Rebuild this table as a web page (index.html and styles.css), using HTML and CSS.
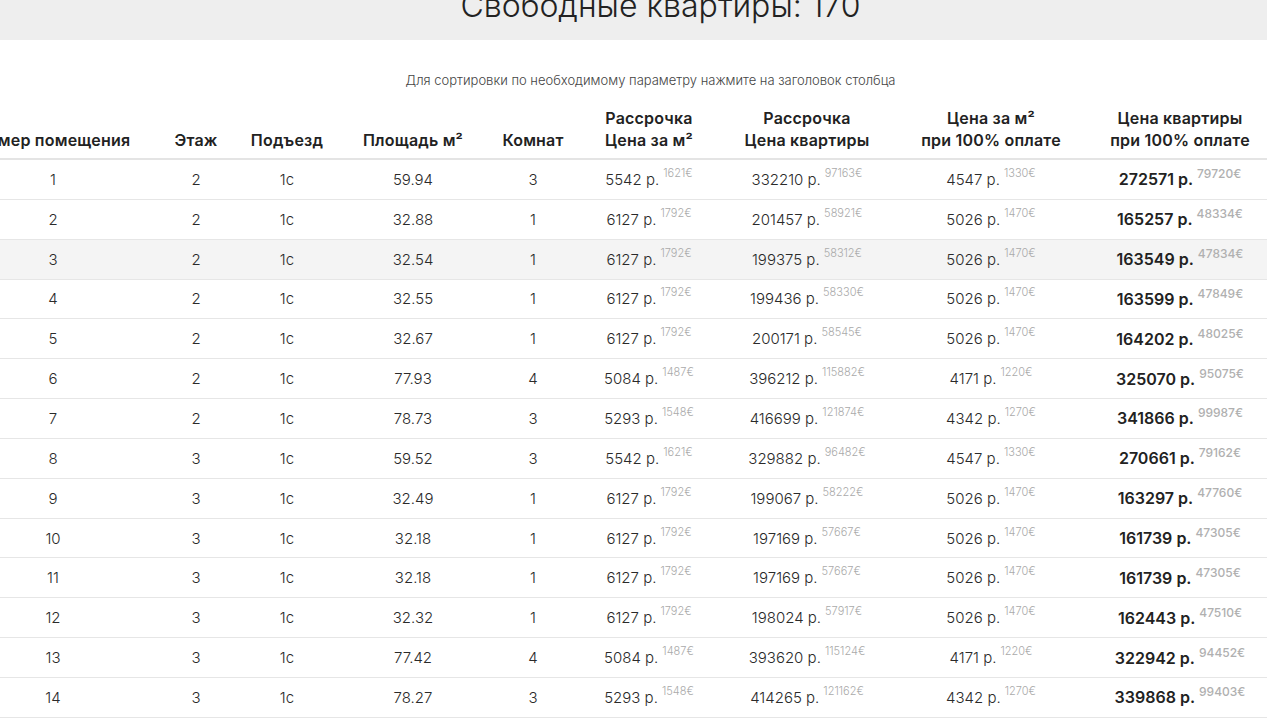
FILE: index.html
```html
<!DOCTYPE html>
<html lang="ru">
<head>
<meta charset="utf-8">
<title>Свободные квартиры</title>
<link rel="stylesheet" href="styles.css">
</head>
<body>
<div class="topbar"><h1 class="title">Свободные квартиры: 170</h1></div>
<p class="hint">Для сортировки по необходимому параметру нажмите на заголовок столбца</p>
<div class="grid">
  <div class="row head">
    <div class="c">Номер помещения</div>
    <div class="c">Этаж</div>
    <div class="c">Подъезд</div>
    <div class="c">Площадь м²</div>
    <div class="c">Комнат</div>
    <div class="c">Рассрочка<br>Цена за м²</div>
    <div class="c">Рассрочка<br>Цена квартиры</div>
    <div class="c">Цена за м²<br>при 100% оплате</div>
    <div class="c">Цена квартиры<br>при 100% оплате</div>
  </div>
  <div class="row"><div class="c">1</div><div class="c">2</div><div class="c">1с</div><div class="c">59.94</div><div class="c">3</div><div class="c"><span>5542 р.</span><sup>1621€</sup></div><div class="c"><span>332210 р.</span><sup>97163€</sup></div><div class="c"><span>4547 р.</span><sup>1330€</sup></div><div class="c b"><span>272571 р.</span><sup>79720€</sup></div></div>
  <div class="row"><div class="c">2</div><div class="c">2</div><div class="c">1с</div><div class="c">32.88</div><div class="c">1</div><div class="c"><span>6127 р.</span><sup>1792€</sup></div><div class="c"><span>201457 р.</span><sup>58921€</sup></div><div class="c"><span>5026 р.</span><sup>1470€</sup></div><div class="c b"><span>165257 р.</span><sup>48334€</sup></div></div>
  <div class="row hover"><div class="c">3</div><div class="c">2</div><div class="c">1с</div><div class="c">32.54</div><div class="c">1</div><div class="c"><span>6127 р.</span><sup>1792€</sup></div><div class="c"><span>199375 р.</span><sup>58312€</sup></div><div class="c"><span>5026 р.</span><sup>1470€</sup></div><div class="c b"><span>163549 р.</span><sup>47834€</sup></div></div>
  <div class="row"><div class="c">4</div><div class="c">2</div><div class="c">1с</div><div class="c">32.55</div><div class="c">1</div><div class="c"><span>6127 р.</span><sup>1792€</sup></div><div class="c"><span>199436 р.</span><sup>58330€</sup></div><div class="c"><span>5026 р.</span><sup>1470€</sup></div><div class="c b"><span>163599 р.</span><sup>47849€</sup></div></div>
  <div class="row"><div class="c">5</div><div class="c">2</div><div class="c">1с</div><div class="c">32.67</div><div class="c">1</div><div class="c"><span>6127 р.</span><sup>1792€</sup></div><div class="c"><span>200171 р.</span><sup>58545€</sup></div><div class="c"><span>5026 р.</span><sup>1470€</sup></div><div class="c b"><span>164202 р.</span><sup>48025€</sup></div></div>
  <div class="row"><div class="c">6</div><div class="c">2</div><div class="c">1с</div><div class="c">77.93</div><div class="c">4</div><div class="c"><span>5084 р.</span><sup>1487€</sup></div><div class="c"><span>396212 р.</span><sup>115882€</sup></div><div class="c"><span>4171 р.</span><sup>1220€</sup></div><div class="c b"><span>325070 р.</span><sup>95075€</sup></div></div>
  <div class="row"><div class="c">7</div><div class="c">2</div><div class="c">1с</div><div class="c">78.73</div><div class="c">3</div><div class="c"><span>5293 р.</span><sup>1548€</sup></div><div class="c"><span>416699 р.</span><sup>121874€</sup></div><div class="c"><span>4342 р.</span><sup>1270€</sup></div><div class="c b"><span>341866 р.</span><sup>99987€</sup></div></div>
  <div class="row"><div class="c">8</div><div class="c">3</div><div class="c">1с</div><div class="c">59.52</div><div class="c">3</div><div class="c"><span>5542 р.</span><sup>1621€</sup></div><div class="c"><span>329882 р.</span><sup>96482€</sup></div><div class="c"><span>4547 р.</span><sup>1330€</sup></div><div class="c b"><span>270661 р.</span><sup>79162€</sup></div></div>
  <div class="row"><div class="c">9</div><div class="c">3</div><div class="c">1с</div><div class="c">32.49</div><div class="c">1</div><div class="c"><span>6127 р.</span><sup>1792€</sup></div><div class="c"><span>199067 р.</span><sup>58222€</sup></div><div class="c"><span>5026 р.</span><sup>1470€</sup></div><div class="c b"><span>163297 р.</span><sup>47760€</sup></div></div>
  <div class="row"><div class="c">10</div><div class="c">3</div><div class="c">1с</div><div class="c">32.18</div><div class="c">1</div><div class="c"><span>6127 р.</span><sup>1792€</sup></div><div class="c"><span>197169 р.</span><sup>57667€</sup></div><div class="c"><span>5026 р.</span><sup>1470€</sup></div><div class="c b"><span>161739 р.</span><sup>47305€</sup></div></div>
  <div class="row"><div class="c">11</div><div class="c">3</div><div class="c">1с</div><div class="c">32.18</div><div class="c">1</div><div class="c"><span>6127 р.</span><sup>1792€</sup></div><div class="c"><span>197169 р.</span><sup>57667€</sup></div><div class="c"><span>5026 р.</span><sup>1470€</sup></div><div class="c b"><span>161739 р.</span><sup>47305€</sup></div></div>
  <div class="row"><div class="c">12</div><div class="c">3</div><div class="c">1с</div><div class="c">32.32</div><div class="c">1</div><div class="c"><span>6127 р.</span><sup>1792€</sup></div><div class="c"><span>198024 р.</span><sup>57917€</sup></div><div class="c"><span>5026 р.</span><sup>1470€</sup></div><div class="c b"><span>162443 р.</span><sup>47510€</sup></div></div>
  <div class="row"><div class="c">13</div><div class="c">3</div><div class="c">1с</div><div class="c">77.42</div><div class="c">4</div><div class="c"><span>5084 р.</span><sup>1487€</sup></div><div class="c"><span>393620 р.</span><sup>115124€</sup></div><div class="c"><span>4171 р.</span><sup>1220€</sup></div><div class="c b"><span>322942 р.</span><sup>94452€</sup></div></div>
  <div class="row"><div class="c">14</div><div class="c">3</div><div class="c">1с</div><div class="c">78.27</div><div class="c">3</div><div class="c"><span>5293 р.</span><sup>1548€</sup></div><div class="c"><span>414265 р.</span><sup>121162€</sup></div><div class="c"><span>4342 р.</span><sup>1270€</sup></div><div class="c b"><span>339868 р.</span><sup>99403€</sup></div></div>
</div>
</body>
</html>
```

FILE: styles.css
```css
html, body {
  margin: 0;
  padding: 0;
  background: #ffffff;
  overflow: hidden;
}
body {
  font-family: Inter, "Noto Sans", sans-serif;
  color: #2a2a2a;
}
.topbar {
  height: 40px;
  background: #eeeeee;
  overflow: hidden;
}
.title {
  margin: -10px 0 0;
  padding-left: 54px;
  text-align: center;
  font-size: 32px;
  line-height: 32px;
  font-weight: 300;
  color: #222;
}
.hint {
  margin: 32px 0 0;
  padding-left: 34px;
  text-align: center;
  font-size: 13px;
  line-height: 16px;
  font-weight: 300;
  color: #444;
}
.grid {
  margin: 19px 0 0 -22px;
  width: 1289px;
}
.row {
  display: grid;
  grid-template-columns: 150px 136px 46px 206px 34px 198px 118px 250px 128px;
  height: 39.85px;
  box-sizing: border-box;
  border-bottom: 1px solid #e6e6e6;
  font-size: 15px;
  font-weight: 300;
}
.row.hover {
  background: #f4f4f4;
}
.row.head {
  height: auto;
  padding-bottom: 7px;
  border-bottom: 2px solid #e4e4e4;
  font-size: 16px;
  letter-spacing: 0.2px;
  font-weight: 600;
  line-height: 22px;
  color: #222;
}
.c {
  display: flex;
  justify-content: center;
  align-items: center;
  white-space: nowrap;
  text-align: center;
}
.head .c {
  align-items: flex-end;
}
.c sup {
  font-size: 11px;
  color: #aaaaaa;
  margin-left: 4px;
  align-self: center;
  position: relative;
  top: -6px;
  line-height: 1;
}
.c.b span {
  font-size: 16px;
  font-weight: 600;
  color: #222;
}
.c.b sup {
  font-size: 12px;
  font-weight: 500;
  color: #b0b0b0;
  margin-left: 4px;
  top: -5px;
}
```
